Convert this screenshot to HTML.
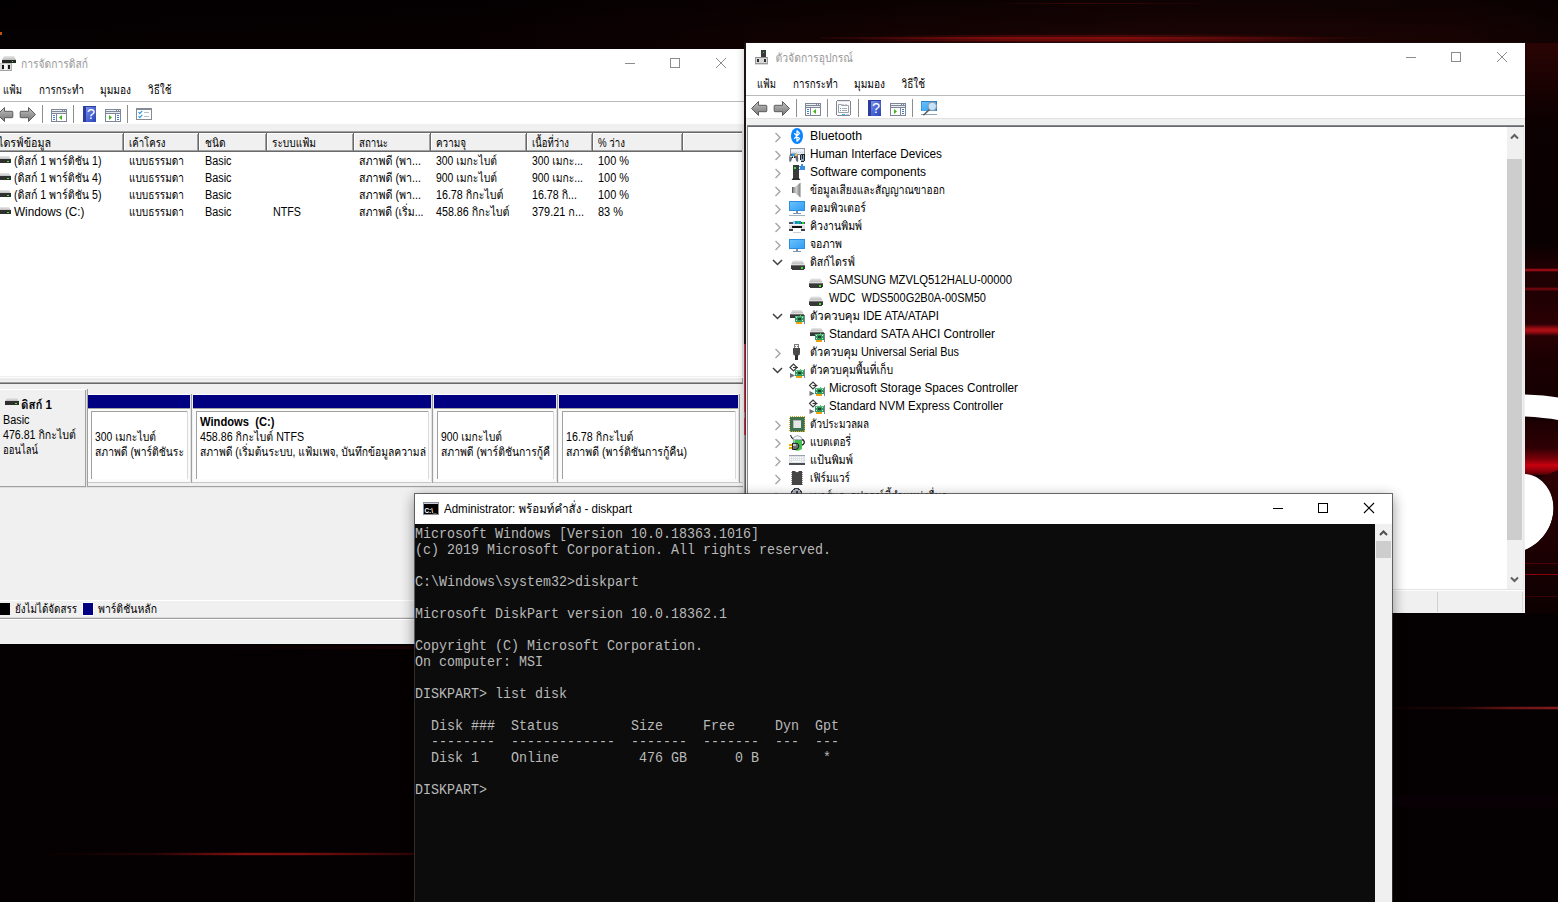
<!DOCTYPE html>
<html lang="th"><head><meta charset="utf-8"><title>desktop</title>
<style>
html,body{margin:0;padding:0;background:#050001;overflow:hidden}
body{width:1558px;height:902px}
svg{display:block;position:absolute;left:0;top:0}
rect{shape-rendering:crispEdges}
text{font-family:"Liberation Sans","Loma","Noto Sans Thai Looped","Sarabun",sans-serif;font-size:12px;fill:#000;white-space:pre}
text.b{font-weight:bold}
text.g{fill:#999}
text.con{font-family:"Liberation Mono","DejaVu Sans Mono",monospace;font-size:15px;fill:#b9b9b9}
text.q{font-family:"Liberation Sans",sans-serif;font-weight:normal;font-size:14.5px;fill:#fff}
</style></head>
<body>
<svg width="1558" height="902" viewBox="0 0 1558 902">
<defs>
<linearGradient id="wtop" x1="0" y1="0" x2="1" y2="0"><stop offset="0" stop-color="#050001"/><stop offset="0.3" stop-color="#070001"/><stop offset="0.55" stop-color="#130202"/><stop offset="0.75" stop-color="#1b0404"/><stop offset="0.93" stop-color="#190303"/><stop offset="1" stop-color="#100202"/></linearGradient>
<linearGradient id="wtopv" x1="0" y1="0" x2="0" y2="1"><stop offset="0" stop-color="#000" stop-opacity="0.45"/><stop offset="0.6" stop-color="#000" stop-opacity="0.1"/><stop offset="1" stop-color="#000" stop-opacity="0"/></linearGradient>
<radialGradient id="wglow" cx="0.5" cy="1" r="0.5" gradientTransform="matrix(1 0 0 1 0 0)"><stop offset="0" stop-color="#8a0a0a" stop-opacity="0.55"/><stop offset="1" stop-color="#8a0a0a" stop-opacity="0"/></radialGradient>
<linearGradient id="hfade" x1="0" y1="0" x2="1" y2="0"><stop offset="0" stop-color="#a01010" stop-opacity="0.1"/><stop offset="0.3" stop-color="#a01010" stop-opacity="0.85"/><stop offset="0.55" stop-color="#a01010" stop-opacity="0.85"/><stop offset="1" stop-color="#a01010" stop-opacity="0"/></linearGradient>
<linearGradient id="hfadeR" x1="0" y1="0" x2="1" y2="0"><stop offset="0" stop-color="#c01010" stop-opacity="0"/><stop offset="1" stop-color="#c81414" stop-opacity="0.95"/></linearGradient>
<linearGradient id="hfadeL" x1="0" y1="0" x2="1" y2="0"><stop offset="0" stop-color="#b01414" stop-opacity="0"/><stop offset="0.3" stop-color="#b01414" stop-opacity="0.18"/><stop offset="0.55" stop-color="#b41616" stop-opacity="0.8"/><stop offset="0.7" stop-color="#b01414" stop-opacity="0.75"/><stop offset="1" stop-color="#901010" stop-opacity="0.3"/></linearGradient>
<linearGradient id="rstrip" x1="0" y1="0" x2="0" y2="1"><stop offset="0" stop-color="#2a0404"/><stop offset="0.065" stop-color="#1c0202"/><stop offset="0.135" stop-color="#0c0001"/><stop offset="0.35" stop-color="#080001"/><stop offset="0.39" stop-color="#1e0002"/><stop offset="0.45" stop-color="#200003"/><stop offset="0.5" stop-color="#2c0004"/><stop offset="0.55" stop-color="#1c0002"/><stop offset="0.61" stop-color="#160002"/><stop offset="1" stop-color="#140102"/></linearGradient>
<linearGradient id="rglow" x1="0" y1="0" x2="0" y2="1"><stop offset="0" stop-color="#1c0002"/><stop offset="0.5" stop-color="#2e0004"/><stop offset="0.7" stop-color="#7a0009"/><stop offset="0.82" stop-color="#c8000f"/><stop offset="0.93" stop-color="#8a000a"/><stop offset="1" stop-color="#4a0005"/></linearGradient>
<linearGradient id="rglow2" x1="0" y1="0" x2="0" y2="1"><stop offset="0" stop-color="#300004"/><stop offset="1" stop-color="#0c0001"/></linearGradient>
<linearGradient id="band330" x1="0" y1="0" x2="0" y2="1"><stop offset="0" stop-color="#c01018" stop-opacity="0"/><stop offset="0.45" stop-color="#c01018" stop-opacity="0.85"/><stop offset="0.6" stop-color="#c01018" stop-opacity="0.85"/><stop offset="1" stop-color="#c01018" stop-opacity="0"/></linearGradient>
<linearGradient id="hfadeR2" x1="0" y1="0" x2="1" y2="0"><stop offset="0" stop-color="#7a1818" stop-opacity="0.05"/><stop offset="0.4" stop-color="#7a1818" stop-opacity="0.18"/><stop offset="0.7" stop-color="#801a1a" stop-opacity="0.7"/><stop offset="1" stop-color="#861c1c" stop-opacity="0.95"/></linearGradient>
<linearGradient id="arw" x1="0" y1="0" x2="0" y2="1"><stop offset="0" stop-color="#c4c4c4"/><stop offset="0.5" stop-color="#9a9a9a"/><stop offset="1" stop-color="#787878"/></linearGradient>
<linearGradient id="hlp" x1="0" y1="0" x2="1" y2="1"><stop offset="0" stop-color="#7d93e6"/><stop offset="0.5" stop-color="#4c68d6"/><stop offset="1" stop-color="#2a46b8"/></linearGradient>
<linearGradient id="drvtop" x1="0" y1="0" x2="0" y2="1"><stop offset="0" stop-color="#e8e8e8"/><stop offset="1" stop-color="#b8b8b8"/></linearGradient>
<linearGradient id="mon" x1="0" y1="0" x2="1" y2="1"><stop offset="0" stop-color="#6cc4ff"/><stop offset="1" stop-color="#2f9bf0"/></linearGradient>
<linearGradient id="spk" x1="0" y1="0" x2="1" y2="0"><stop offset="0" stop-color="#6e6e6e"/><stop offset="0.5" stop-color="#d0d0d0"/><stop offset="1" stop-color="#7c7c7c"/></linearGradient>
<linearGradient id="sh_r" x1="0" y1="0" x2="1" y2="0"><stop offset="0" stop-color="#000" stop-opacity="0.22"/><stop offset="0.35" stop-color="#000" stop-opacity="0.09"/><stop offset="1" stop-color="#000" stop-opacity="0"/></linearGradient>
<linearGradient id="sh_l" x1="1" y1="0" x2="0" y2="0"><stop offset="0" stop-color="#000" stop-opacity="0.22"/><stop offset="0.35" stop-color="#000" stop-opacity="0.09"/><stop offset="1" stop-color="#000" stop-opacity="0"/></linearGradient>
<linearGradient id="sh_t" x1="0" y1="1" x2="0" y2="0"><stop offset="0" stop-color="#000" stop-opacity="0.20"/><stop offset="0.4" stop-color="#000" stop-opacity="0.07"/><stop offset="1" stop-color="#000" stop-opacity="0"/></linearGradient>
<linearGradient id="sh_b" x1="0" y1="0" x2="0" y2="1"><stop offset="0" stop-color="#000" stop-opacity="0.22"/><stop offset="0.4" stop-color="#000" stop-opacity="0.08"/><stop offset="1" stop-color="#000" stop-opacity="0"/></linearGradient>
<filter id="bl1" filterUnits="userSpaceOnUse" x="725" y="23" width="820" height="610"><feGaussianBlur stdDeviation="5"/></filter>
<clipPath id="cp2"><rect x="0" y="49" width="745" height="595"/></clipPath>
<filter id="bl3" filterUnits="userSpaceOnUse" x="386" y="465" width="1035" height="523"><feGaussianBlur stdDeviation="7"/></filter>
</defs>
<rect x="0" y="0" width="1558" height="902" fill="#050001"/>
<rect x="0" y="0" width="1558" height="49" fill="url(#wtop)"/>
<rect x="0" y="0" width="1558" height="49" fill="url(#wtopv)"/>
<rect x="840" y="22" width="520" height="21" fill="url(#wglow)"/>
<rect x="820" y="37" width="560" height="2" fill="url(#hfade)" opacity="0.8"/>
<rect x="860" y="39" width="480" height="2" fill="url(#hfade)" opacity="0.5"/>
<rect x="880" y="35" width="440" height="2" fill="url(#hfade)" opacity="0.25"/>
<rect x="1000" y="3" width="220" height="1" fill="url(#hfade)" opacity="0.3"/>
<rect x="0" y="32" width="2" height="3" fill="#c05010"/>
<rect x="1525" y="43" width="33" height="570" fill="url(#rstrip)"/>
<rect x="1525" y="268" width="33" height="4" fill="#a00c14" opacity="0.3"/>
<rect x="1525" y="269" width="33" height="2" fill="#a00c14" opacity="0.85"/>
<rect x="1525" y="287" width="33" height="4" fill="#7a0a10" opacity="0.3"/>
<rect x="1525" y="288" width="33" height="2" fill="#7a0a10" opacity="0.75"/>
<rect x="1525" y="324" width="33" height="12" fill="url(#band330)"/>
<path d="M1525 394.5 Q1545 395 1558 397.5 L1558 420 Q1545 417.5 1525 416.5 Z" fill="#fff"/>
<rect x="1525" y="421" width="33" height="54" fill="url(#rglow)"/>
<path d="M1525 474 C1538 474 1553.500 488 1553.500 508 C1553.500 528 1540 544 1525 550 Z" fill="#fff"/>
<path d="M1525 550 C1540 544 1553.500 528 1553.500 508 C1553.500 495 1548 484 1540 478 L1558 470 L1558 613 L1525 613 Z" fill="url(#rglow2)"/>
<rect x="1525" y="563" width="33" height="1" fill="#4a0005"/>
<rect x="1525" y="574" width="33" height="1" fill="#8a000a"/>
<rect x="1525" y="596" width="33" height="1" fill="#3a0004"/>
<rect x="1393" y="707" width="165" height="2" fill="url(#hfadeR2)"/>
<rect x="1393" y="706" width="165" height="4" fill="url(#hfadeR2)" opacity="0.3"/>
<rect x="1393" y="795" width="165" height="12" fill="#0a0006" opacity="0.8"/>
<rect x="40" y="853" width="375" height="2" fill="url(#hfadeL)" opacity="0.85"/>
<rect x="40" y="852" width="375" height="4" fill="url(#hfadeL)" opacity="0.18"/>
<rect x="200" y="646" width="215" height="3" fill="url(#hfadeR)" opacity="0.12"/>
<rect x="-8" y="49" width="752" height="595" fill="#f0f0f0"/>
<rect x="-8" y="49" width="752" height="52" fill="#ffffff"/>
<rect x="-8" y="101" width="752" height="1" fill="#b9b9b9"/>
<rect x="-8" y="102" width="752" height="22" fill="#ffffff"/>
<path d="M4 56 H14 L16 60 H2 Z" fill="url(#drvtop)"/>
<rect x="2.3" y="59.8" width="13.400" height="3.400" rx="0.8" fill="#262626"/>
<rect x="11.5" y="60.8" width="1.8" height="1.6" fill="#3cf03c"/>
<rect x="-1" y="63" width="13" height="8" fill="#dadada"/>
<rect x="4" y="64" width="3" height="6" fill="#f4f4f4"/>
<rect x="-1" y="70" width="13" height="1" fill="#a2a2a2"/>
<rect x="11" y="63" width="1" height="8" fill="#b0b0b0"/>
<rect x="-1" y="63" width="13" height="1" fill="#c2c2c2"/>
<rect x="2" y="65" width="2" height="3.5" fill="#141414"/>
<rect x="8" y="65" width="2" height="3.5" fill="#141414"/>
<text x="21" y="68" class="g" textLength="67" lengthAdjust="spacingAndGlyphs">การจัดการดิสก์</text>
<path d="M716 58 L726 68 M726 58 L716 68" stroke="#8c8c8c" stroke-width="1" fill="none"/>
<rect x="670.5" y="58.5" width="9" height="9" fill="none" stroke="#8c8c8c" stroke-width="1" shape-rendering="crispEdges"/>
<rect x="625" y="63" width="10" height="1" fill="#8c8c8c"/>
<text x="3" y="94" textLength="19" lengthAdjust="spacingAndGlyphs">แฟ้ม</text>
<text x="39" y="94" textLength="45" lengthAdjust="spacingAndGlyphs">การกระทำ</text>
<text x="100" y="94" textLength="31" lengthAdjust="spacingAndGlyphs">มุมมอง</text>
<text x="148" y="94" textLength="23.5" lengthAdjust="spacingAndGlyphs">วิธีใช้</text>
<path d="M-2.5 114.5 L4.5 107.5 V111.3 H12 Q12.8 111.3 12.8 112.1 V116.9 Q12.8 117.7 12 117.7 H4.5 V121.5 Z" fill="url(#arw)" stroke="#5c5c5c" stroke-width="1" stroke-linejoin="round"/>
<path d="M35.5 114.5 L28.5 107.5 V111.3 H21 Q20.2 111.3 20.2 112.1 V116.9 Q20.2 117.7 21 117.7 H28.5 V121.5 Z" fill="url(#arw)" stroke="#5c5c5c" stroke-width="1" stroke-linejoin="round"/>
<rect x="42" y="105" width="1" height="18" fill="#8d8d8d"/>
<rect x="51" y="109" width="16" height="13" fill="#7d8798"/>
<rect x="52" y="110" width="14" height="1" fill="#eef1f6"/>
<rect x="62" y="110" width="1" height="1" fill="#7d8798"/>
<rect x="64" y="110" width="1" height="1" fill="#7d8798"/>
<rect x="52" y="112" width="14" height="1" fill="#e4e8ef"/>
<rect x="52" y="114" width="4" height="7" fill="#ffffff"/>
<rect x="57" y="114" width="9" height="7" fill="#ffffff"/>
<rect x="53" y="115" width="2" height="1" fill="#3c7fd2"/>
<rect x="53" y="117" width="2" height="1" fill="#3c7fd2"/>
<rect x="53" y="119" width="2" height="1" fill="#3c7fd2"/>
<path d="M59 117.5 L62 115 V120 Z" fill="#3db51a"/>
<rect x="73" y="105" width="1" height="18" fill="#8d8d8d"/>
<rect x="83" y="106" width="13" height="16" fill="#2b3c9c"/>
<rect x="86" y="106.5" width="9.5" height="15" fill="url(#hlp)"/>
<text x="87" y="119.3" class="q">?</text>
<rect x="105" y="109" width="16" height="13" fill="#7d8798"/>
<rect x="106" y="110" width="14" height="1" fill="#eef1f6"/>
<rect x="116" y="110" width="1" height="1" fill="#7d8798"/>
<rect x="118" y="110" width="1" height="1" fill="#7d8798"/>
<rect x="106" y="112" width="14" height="1" fill="#e4e8ef"/>
<rect x="106" y="114" width="9" height="7" fill="#ffffff"/>
<rect x="116" y="114" width="4" height="7" fill="#ffffff"/>
<rect x="117" y="115" width="2" height="1" fill="#3c7fd2"/>
<rect x="117" y="117" width="2" height="1" fill="#3c7fd2"/>
<rect x="117" y="119" width="2" height="1" fill="#3c7fd2"/>
<path d="M112 117.5 L109 115 V120 Z" fill="#3db51a"/>
<rect x="127" y="105" width="1" height="18" fill="#8d8d8d"/>
<rect x="136" y="108" width="16" height="12" fill="#848b96"/>
<rect x="137" y="110" width="14" height="9" fill="#ffffff"/>
<path d="M138.5 112 l1.3 1.6 l2.4 -2.8" stroke="#2f8fe6" stroke-width="1.1" fill="none"/>
<rect x="144" y="112" width="5" height="1" fill="#b9bec6"/>
<path d="M138.5 116 l1.3 1.6 l2.4 -2.8" stroke="#2f8fe6" stroke-width="1.1" fill="none"/>
<rect x="144" y="116" width="5" height="1" fill="#b9bec6"/>
<rect x="-8" y="131" width="750" height="1" fill="#a0a0a0"/>
<rect x="-8" y="132" width="750" height="1" fill="#696969"/>
<rect x="-8" y="133" width="750" height="243" fill="#ffffff"/>
<rect x="-8" y="133" width="750" height="19" fill="#f0f0f0"/>
<rect x="-8" y="133" width="750" height="1" fill="#ffffff"/>
<rect x="-8" y="150" width="750" height="1" fill="#a0a0a0"/>
<rect x="-8" y="151" width="750" height="1" fill="#696969"/>
<rect x="122" y="134" width="1" height="17" fill="#a0a0a0"/>
<rect x="123" y="133" width="1" height="19" fill="#696969"/>
<rect x="124" y="133" width="1" height="17" fill="#ffffff"/>
<rect x="197" y="134" width="1" height="17" fill="#a0a0a0"/>
<rect x="198" y="133" width="1" height="19" fill="#696969"/>
<rect x="199" y="133" width="1" height="17" fill="#ffffff"/>
<rect x="265" y="134" width="1" height="17" fill="#a0a0a0"/>
<rect x="266" y="133" width="1" height="19" fill="#696969"/>
<rect x="267" y="133" width="1" height="17" fill="#ffffff"/>
<rect x="352" y="134" width="1" height="17" fill="#a0a0a0"/>
<rect x="353" y="133" width="1" height="19" fill="#696969"/>
<rect x="354" y="133" width="1" height="17" fill="#ffffff"/>
<rect x="429" y="134" width="1" height="17" fill="#a0a0a0"/>
<rect x="430" y="133" width="1" height="19" fill="#696969"/>
<rect x="431" y="133" width="1" height="17" fill="#ffffff"/>
<rect x="525" y="134" width="1" height="17" fill="#a0a0a0"/>
<rect x="526" y="133" width="1" height="19" fill="#696969"/>
<rect x="527" y="133" width="1" height="17" fill="#ffffff"/>
<rect x="591" y="134" width="1" height="17" fill="#a0a0a0"/>
<rect x="592" y="133" width="1" height="19" fill="#696969"/>
<rect x="593" y="133" width="1" height="17" fill="#ffffff"/>
<rect x="681" y="134" width="1" height="17" fill="#a0a0a0"/>
<rect x="682" y="133" width="1" height="19" fill="#696969"/>
<rect x="683" y="133" width="1" height="17" fill="#ffffff"/>
<rect x="742" y="131" width="1" height="246" fill="#e3e3e3"/>
<rect x="743" y="124" width="1" height="260" fill="#f0f0f0"/>
<text x="-2" y="147" textLength="53" lengthAdjust="spacingAndGlyphs">ไดรฟ์ข้อมูล</text>
<text x="129" y="147" textLength="36.5" lengthAdjust="spacingAndGlyphs">เค้าโครง</text>
<text x="205" y="147" textLength="20.5" lengthAdjust="spacingAndGlyphs">ชนิด</text>
<text x="272" y="147" textLength="44" lengthAdjust="spacingAndGlyphs">ระบบแฟ้ม</text>
<text x="359" y="147" textLength="29" lengthAdjust="spacingAndGlyphs">สถานะ</text>
<text x="436" y="147" textLength="30" lengthAdjust="spacingAndGlyphs">ความจุ</text>
<text x="532" y="147" textLength="37" lengthAdjust="spacingAndGlyphs">เนื้อที่ว่าง</text>
<text x="598" y="147" textLength="27" lengthAdjust="spacingAndGlyphs">% ว่าง</text>
<path d="M-1 156 H9 L11 159.5 H-3 Z" fill="url(#drvtop)"/>
<rect x="-3" y="159.3" width="14" height="3.700" rx="0.8" fill="#2f2f2f"/>
<rect x="7" y="160.5" width="1.8" height="1.6" fill="#3cf03c"/>
<text x="14" y="165" textLength="87.5" lengthAdjust="spacingAndGlyphs">(ดิสก์ 1 พาร์ติชัน 1)</text>
<text x="129" y="165" textLength="55" lengthAdjust="spacingAndGlyphs">แบบธรรมดา</text>
<text x="205" y="165" textLength="26.5" lengthAdjust="spacingAndGlyphs">Basic</text>
<text x="359" y="165" textLength="62" lengthAdjust="spacingAndGlyphs">สภาพดี (พา...</text>
<text x="436" y="165" textLength="61" lengthAdjust="spacingAndGlyphs">300 เมกะไบต์</text>
<text x="532" y="165" textLength="51" lengthAdjust="spacingAndGlyphs">300 เมกะ...</text>
<text x="598" y="165" textLength="31" lengthAdjust="spacingAndGlyphs">100 %</text>
<path d="M-1 173 H9 L11 176.5 H-3 Z" fill="url(#drvtop)"/>
<rect x="-3" y="176.3" width="14" height="3.700" rx="0.8" fill="#2f2f2f"/>
<rect x="7" y="177.5" width="1.8" height="1.6" fill="#3cf03c"/>
<text x="14" y="182" textLength="87.5" lengthAdjust="spacingAndGlyphs">(ดิสก์ 1 พาร์ติชัน 4)</text>
<text x="129" y="182" textLength="55" lengthAdjust="spacingAndGlyphs">แบบธรรมดา</text>
<text x="205" y="182" textLength="26.5" lengthAdjust="spacingAndGlyphs">Basic</text>
<text x="359" y="182" textLength="62" lengthAdjust="spacingAndGlyphs">สภาพดี (พา...</text>
<text x="436" y="182" textLength="61" lengthAdjust="spacingAndGlyphs">900 เมกะไบต์</text>
<text x="532" y="182" textLength="51" lengthAdjust="spacingAndGlyphs">900 เมกะ...</text>
<text x="598" y="182" textLength="31" lengthAdjust="spacingAndGlyphs">100 %</text>
<path d="M-1 190 H9 L11 193.5 H-3 Z" fill="url(#drvtop)"/>
<rect x="-3" y="193.3" width="14" height="3.700" rx="0.8" fill="#2f2f2f"/>
<rect x="7" y="194.5" width="1.8" height="1.6" fill="#3cf03c"/>
<text x="14" y="199" textLength="87.5" lengthAdjust="spacingAndGlyphs">(ดิสก์ 1 พาร์ติชัน 5)</text>
<text x="129" y="199" textLength="55" lengthAdjust="spacingAndGlyphs">แบบธรรมดา</text>
<text x="205" y="199" textLength="26.5" lengthAdjust="spacingAndGlyphs">Basic</text>
<text x="359" y="199" textLength="62" lengthAdjust="spacingAndGlyphs">สภาพดี (พา...</text>
<text x="436" y="199" textLength="67.5" lengthAdjust="spacingAndGlyphs">16.78 กิกะไบต์</text>
<text x="532" y="199" textLength="45" lengthAdjust="spacingAndGlyphs">16.78 กิ...</text>
<text x="598" y="199" textLength="31" lengthAdjust="spacingAndGlyphs">100 %</text>
<path d="M-1 207 H9 L11 210.5 H-3 Z" fill="url(#drvtop)"/>
<rect x="-3" y="210.3" width="14" height="3.700" rx="0.8" fill="#2f2f2f"/>
<rect x="7" y="211.5" width="1.8" height="1.6" fill="#3cf03c"/>
<text x="14" y="216" textLength="70.5" lengthAdjust="spacingAndGlyphs">Windows (C:)</text>
<text x="129" y="216" textLength="55" lengthAdjust="spacingAndGlyphs">แบบธรรมดา</text>
<text x="205" y="216" textLength="26.5" lengthAdjust="spacingAndGlyphs">Basic</text>
<text x="273" y="216" textLength="28" lengthAdjust="spacingAndGlyphs">NTFS</text>
<text x="359" y="216" textLength="64.5" lengthAdjust="spacingAndGlyphs">สภาพดี (เริ่ม...</text>
<text x="436" y="216" textLength="73.5" lengthAdjust="spacingAndGlyphs">458.86 กิกะไบต์</text>
<text x="532" y="216" textLength="52" lengthAdjust="spacingAndGlyphs">379.21 ก...</text>
<text x="598" y="216" textLength="25" lengthAdjust="spacingAndGlyphs">83 %</text>
<rect x="-8" y="376" width="751" height="8" fill="#f0f0f0"/>
<rect x="-8" y="377" width="751" height="1" fill="#fafafa"/>
<rect x="-8" y="379" width="751" height="1" fill="#e6e6e6"/>
<rect x="-8" y="382" width="751" height="1" fill="#a0a0a0"/>
<rect x="-8" y="383" width="751" height="1" fill="#696969"/>
<rect x="741" y="378" width="2" height="5" fill="#a0a0a0"/>
<rect x="741" y="378" width="1" height="4" fill="#f0f0f0"/>
<rect x="-8" y="389" width="94" height="98" fill="#f0f0f0"/>
<rect x="-8" y="389" width="95" height="1" fill="#ffffff"/>
<rect x="85" y="390" width="1" height="97" fill="#a0a0a0"/>
<rect x="86" y="389" width="1" height="99" fill="#e3e3e3"/>
<rect x="-8" y="486" width="94" height="1" fill="#a0a0a0"/>
<rect x="-8" y="487" width="95" height="1" fill="#dcdcdc"/>
<path d="M7 398 H17 L19 401.5 H5 Z" fill="url(#drvtop)"/>
<rect x="5" y="401.3" width="14" height="3.700" rx="0.8" fill="#2f2f2f"/>
<rect x="15" y="402.5" width="1.8" height="1.6" fill="#3cf03c"/>
<text x="21" y="408.5" class="b" textLength="31" lengthAdjust="spacingAndGlyphs">ดิสก์ 1</text>
<text x="3" y="424" textLength="26.5" lengthAdjust="spacingAndGlyphs">Basic</text>
<text x="3" y="439" textLength="73" lengthAdjust="spacingAndGlyphs">476.81 กิกะไบต์</text>
<text x="3" y="454" textLength="35" lengthAdjust="spacingAndGlyphs">ออนไลน์</text>
<rect x="87" y="389" width="656" height="98" fill="#f0f0f0"/>
<rect x="87" y="482" width="656" height="1" fill="#c8c8c8"/>
<rect x="87" y="486" width="656" height="1" fill="#a0a0a0"/>
<rect x="87" y="487" width="656" height="1" fill="#e3e3e3"/>
<rect x="88" y="394" width="102" height="1" fill="#ffffff"/>
<rect x="88" y="395" width="102" height="13" fill="#000080"/>
<rect x="88" y="408" width="102" height="74" fill="#ffffff"/>
<rect x="88" y="408" width="102" height="3" fill="#fbfbfb"/>
<rect x="88" y="408" width="102" height="1" fill="#a6a6a0"/>
<rect x="88" y="409" width="3" height="73" fill="#fbfbfb"/>
<rect x="187" y="409" width="3" height="73" fill="#fbfbfb"/>
<rect x="88" y="479" width="102" height="3" fill="#fbfbfb"/>
<rect x="91" y="411" width="96" height="1" fill="#a0a0a0"/>
<rect x="91" y="411" width="1" height="68" fill="#a0a0a0"/>
<rect x="187" y="411" width="1" height="68" fill="#dadada"/>
<rect x="190" y="394" width="1" height="89" fill="#e3e3e3"/>
<rect x="191" y="394" width="1" height="89" fill="#a0a0a0"/>
<rect x="193" y="394" width="238" height="1" fill="#ffffff"/>
<rect x="193" y="395" width="238" height="13" fill="#000080"/>
<rect x="193" y="408" width="238" height="74" fill="#ffffff"/>
<rect x="193" y="408" width="238" height="3" fill="#fbfbfb"/>
<rect x="193" y="408" width="238" height="1" fill="#a6a6a0"/>
<rect x="193" y="409" width="3" height="73" fill="#fbfbfb"/>
<rect x="428" y="409" width="3" height="73" fill="#fbfbfb"/>
<rect x="193" y="479" width="238" height="3" fill="#fbfbfb"/>
<rect x="196" y="411" width="232" height="1" fill="#a0a0a0"/>
<rect x="196" y="411" width="1" height="68" fill="#a0a0a0"/>
<rect x="428" y="411" width="1" height="68" fill="#dadada"/>
<rect x="431" y="394" width="1" height="89" fill="#e3e3e3"/>
<rect x="432" y="394" width="1" height="89" fill="#a0a0a0"/>
<rect x="434" y="394" width="122" height="1" fill="#ffffff"/>
<rect x="434" y="395" width="122" height="13" fill="#000080"/>
<rect x="434" y="408" width="122" height="74" fill="#ffffff"/>
<rect x="434" y="408" width="122" height="3" fill="#fbfbfb"/>
<rect x="434" y="408" width="122" height="1" fill="#a6a6a0"/>
<rect x="434" y="409" width="3" height="73" fill="#fbfbfb"/>
<rect x="553" y="409" width="3" height="73" fill="#fbfbfb"/>
<rect x="434" y="479" width="122" height="3" fill="#fbfbfb"/>
<rect x="437" y="411" width="116" height="1" fill="#a0a0a0"/>
<rect x="437" y="411" width="1" height="68" fill="#a0a0a0"/>
<rect x="553" y="411" width="1" height="68" fill="#dadada"/>
<rect x="556" y="394" width="1" height="89" fill="#e3e3e3"/>
<rect x="557" y="394" width="1" height="89" fill="#a0a0a0"/>
<rect x="559" y="394" width="179" height="1" fill="#ffffff"/>
<rect x="559" y="395" width="179" height="13" fill="#000080"/>
<rect x="559" y="408" width="179" height="74" fill="#ffffff"/>
<rect x="559" y="408" width="179" height="3" fill="#fbfbfb"/>
<rect x="559" y="408" width="179" height="1" fill="#a6a6a0"/>
<rect x="559" y="409" width="3" height="73" fill="#fbfbfb"/>
<rect x="735" y="409" width="3" height="73" fill="#fbfbfb"/>
<rect x="559" y="479" width="179" height="3" fill="#fbfbfb"/>
<rect x="562" y="411" width="173" height="1" fill="#a0a0a0"/>
<rect x="562" y="411" width="1" height="68" fill="#a0a0a0"/>
<rect x="735" y="411" width="1" height="68" fill="#dadada"/>
<rect x="738" y="394" width="1" height="89" fill="#e3e3e3"/>
<rect x="739" y="394" width="1" height="89" fill="#a0a0a0"/>
<rect x="87" y="389" width="1" height="98" fill="#a0a0a0"/>
<text x="95" y="441" textLength="61" lengthAdjust="spacingAndGlyphs">300 เมกะไบต์</text>
<text x="95" y="456" textLength="89" lengthAdjust="spacingAndGlyphs">สภาพดี (พาร์ติชันระ</text>
<text x="200" y="426" class="b" textLength="74.5" lengthAdjust="spacingAndGlyphs">Windows  (C:)</text>
<text x="200" y="441" textLength="104" lengthAdjust="spacingAndGlyphs">458.86 กิกะไบต์ NTFS</text>
<text x="200" y="456" textLength="226" lengthAdjust="spacingAndGlyphs">สภาพดี (เริ่มต้นระบบ, แฟ้มเพจ, บันทึกข้อมูลความล่</text>
<text x="441" y="441" textLength="61" lengthAdjust="spacingAndGlyphs">900 เมกะไบต์</text>
<text x="441" y="456" textLength="109" lengthAdjust="spacingAndGlyphs">สภาพดี (พาร์ติชันการกู้คื</text>
<text x="566" y="441" textLength="67.5" lengthAdjust="spacingAndGlyphs">16.78 กิกะไบต์</text>
<text x="566" y="456" textLength="121" lengthAdjust="spacingAndGlyphs">สภาพดี (พาร์ติชันการกู้คืน)</text>
<rect x="-8" y="600" width="752" height="1" fill="#ffffff"/>
<rect x="-8" y="603" width="18" height="12" fill="#000000"/>
<text x="15" y="613" textLength="62" lengthAdjust="spacingAndGlyphs">ยังไม่ได้จัดสรร</text>
<rect x="82" y="602" width="12" height="14" fill="#ffffff"/>
<rect x="83" y="603" width="10" height="12" fill="#000080"/>
<text x="98" y="613" textLength="59" lengthAdjust="spacingAndGlyphs">พาร์ติชันหลัก</text>
<rect x="-8" y="617" width="752" height="1" fill="#dcdcdc"/>
<rect x="-8" y="618" width="752" height="1" fill="#a0a0a0"/>
<rect x="-8" y="619" width="752" height="1" fill="#ffffff"/>
<g clip-path="url(#cp2)"><rect x="745" y="45" width="780" height="570" fill="#000" opacity="0.28" filter="url(#bl1)"/></g>
<rect x="744" y="42" width="781" height="1" fill="#1c0a0a"/>
<rect x="744" y="43" width="1" height="301" fill="#1c1010"/>
<rect x="744" y="344" width="1" height="68" fill="#b03040"/>
<rect x="744" y="412" width="1" height="6" fill="#8a8080"/>
<rect x="744" y="418" width="1" height="17" fill="#b03040"/>
<rect x="744" y="435" width="1" height="178" fill="#909090"/>
<rect x="745" y="43" width="1" height="301" fill="#1c1212"/>
<rect x="745" y="344" width="1" height="91" fill="#70202c"/>
<rect x="745" y="435" width="1" height="178" fill="#5e5a5a"/>
<rect x="746" y="43" width="779" height="570" fill="#f0f0f0"/>
<rect x="746" y="43" width="779" height="52" fill="#ffffff"/>
<rect x="746" y="95" width="779" height="1" fill="#b9b9b9"/>
<rect x="746" y="96" width="779" height="22" fill="#ffffff"/>
<rect x="746" y="118" width="779" height="1" fill="#e2e2e2"/>
<rect x="761" y="49.5" width="5" height="7.5" fill="#3a3a3a"/>
<rect x="763" y="51.5" width="1" height="1" fill="#38e038"/>
<rect x="755" y="57" width="13" height="7.5" fill="#d8d8d8"/>
<rect x="755" y="57" width="13" height="1" fill="#8e8e8e"/>
<rect x="755" y="63" width="13" height="1" fill="#9a9a9a"/>
<rect x="755" y="57" width="1" height="7" fill="#9a9a9a"/>
<rect x="767" y="57" width="1" height="7" fill="#9a9a9a"/>
<rect x="757" y="59" width="2" height="3" fill="#2c2c2c"/>
<rect x="764" y="59" width="2" height="3" fill="#2c2c2c"/>
<text x="775.5" y="62" class="g" textLength="77.5" lengthAdjust="spacingAndGlyphs">ตัวจัดการอุปกรณ์</text>
<path d="M1497 52 L1507 62 M1507 52 L1497 62" stroke="#8c8c8c" stroke-width="1" fill="none"/>
<rect x="1451.5" y="52.5" width="9" height="9" fill="none" stroke="#8c8c8c" stroke-width="1" shape-rendering="crispEdges"/>
<rect x="1406" y="57" width="10" height="1" fill="#8c8c8c"/>
<text x="757" y="88" textLength="19" lengthAdjust="spacingAndGlyphs">แฟ้ม</text>
<text x="793" y="88" textLength="45" lengthAdjust="spacingAndGlyphs">การกระทำ</text>
<text x="854" y="88" textLength="31" lengthAdjust="spacingAndGlyphs">มุมมอง</text>
<text x="901.5" y="88" textLength="23.5" lengthAdjust="spacingAndGlyphs">วิธีใช้</text>
<path d="M751.5 108.5 L758.5 101.5 V105.3 H766 Q766.8 105.3 766.8 106.1 V110.9 Q766.8 111.7 766 111.7 H758.5 V115.5 Z" fill="url(#arw)" stroke="#5c5c5c" stroke-width="1" stroke-linejoin="round"/>
<path d="M789.5 108.5 L782.5 101.5 V105.3 H775 Q774.2 105.3 774.2 106.1 V110.9 Q774.2 111.7 775 111.7 H782.5 V115.5 Z" fill="url(#arw)" stroke="#5c5c5c" stroke-width="1" stroke-linejoin="round"/>
<rect x="796" y="99" width="1" height="18" fill="#8d8d8d"/>
<rect x="805" y="103" width="16" height="13" fill="#7d8798"/>
<rect x="806" y="104" width="14" height="1" fill="#eef1f6"/>
<rect x="816" y="104" width="1" height="1" fill="#7d8798"/>
<rect x="818" y="104" width="1" height="1" fill="#7d8798"/>
<rect x="806" y="106" width="14" height="1" fill="#e4e8ef"/>
<rect x="806" y="108" width="4" height="7" fill="#ffffff"/>
<rect x="811" y="108" width="9" height="7" fill="#ffffff"/>
<rect x="807" y="109" width="2" height="1" fill="#3c7fd2"/>
<rect x="807" y="111" width="2" height="1" fill="#3c7fd2"/>
<rect x="807" y="113" width="2" height="1" fill="#3c7fd2"/>
<path d="M813 111.5 L816 109 V114 Z" fill="#3db51a"/>
<rect x="827" y="99" width="1" height="18" fill="#8d8d8d"/>
<rect x="836.5" y="100.5" width="14" height="15" rx="1.6" fill="#fbfbfd" stroke="#80858f" stroke-width="1"/>
<rect x="838" y="101" width="11" height="1" fill="#e3e6ec"/>
<path d="M838.5 112.5 V104.5 H841.5 V105.5 H848.5 V112.5 Z" fill="#ffffff" stroke="#9aa1ad" stroke-width="1"/>
<rect x="842" y="104" width="2" height="1" fill="#c5cad3"/>
<rect x="845" y="104" width="2" height="1" fill="#c5cad3"/>
<rect x="840" y="108" width="1" height="1" fill="#1fb4f2"/>
<rect x="842" y="108" width="5" height="1" fill="#a7adb8"/>
<rect x="840" y="110" width="1" height="1" fill="#8a909b"/>
<rect x="842" y="110" width="5" height="1" fill="#a7adb8"/>
<rect x="842" y="114" width="3" height="1" fill="#25b7f0"/>
<rect x="846" y="114" width="3" height="1" fill="#c5cad3"/>
<rect x="858" y="99" width="1" height="18" fill="#8d8d8d"/>
<rect x="868" y="100" width="13" height="16" fill="#2b3c9c"/>
<rect x="871" y="100.5" width="9.5" height="15" fill="url(#hlp)"/>
<text x="872" y="113.3" class="q">?</text>
<rect x="890" y="103" width="16" height="13" fill="#7d8798"/>
<rect x="891" y="104" width="14" height="1" fill="#eef1f6"/>
<rect x="901" y="104" width="1" height="1" fill="#7d8798"/>
<rect x="903" y="104" width="1" height="1" fill="#7d8798"/>
<rect x="891" y="106" width="14" height="1" fill="#e4e8ef"/>
<rect x="891" y="108" width="9" height="7" fill="#ffffff"/>
<rect x="901" y="108" width="4" height="7" fill="#ffffff"/>
<rect x="902" y="109" width="2" height="1" fill="#3c7fd2"/>
<rect x="902" y="111" width="2" height="1" fill="#3c7fd2"/>
<rect x="902" y="113" width="2" height="1" fill="#3c7fd2"/>
<path d="M897 111.5 L894 109 V114 Z" fill="#3db51a"/>
<rect x="912" y="99" width="1" height="18" fill="#8d8d8d"/>
<rect x="921" y="101" width="16" height="9.5" fill="url(#mon)"/>
<rect x="921" y="101" width="16" height="1" fill="#2a7fc4"/>
<rect x="921" y="101" width="1" height="9.5" fill="#3a93dc"/>
<rect x="936" y="101" width="1" height="9.5" fill="#2a7fc4"/>
<rect x="921" y="114" width="16" height="1.3" fill="#8da3ba"/>
<circle cx="932.3" cy="106.3" r="4.200" fill="#cfeaff" fill-opacity="0.9" stroke="#8e979f" stroke-width="1.1"/>
<path d="M929.3 109.6 L923.3 115.3" stroke="#5d6168" stroke-width="1.5" fill="none"/>
<rect x="747" y="125" width="777" height="1" fill="#828790"/>
<rect x="747" y="126" width="777" height="1" fill="#696969"/>
<rect x="747" y="125" width="1" height="464" fill="#828790"/>
<rect x="748" y="127" width="759" height="462" fill="#ffffff"/>
<rect x="1507" y="127" width="17" height="462" fill="#f0f0f0"/>
<rect x="1523" y="127" width="1" height="462" fill="#e8e8e8"/>
<rect x="1507" y="159" width="15" height="381" fill="#cdcdcd"/>
<path d="M1511.0 138.5 L1514.5 135.0 L1518.0 138.5" stroke="#606060" stroke-width="2" fill="none"/>
<path d="M1511.0 577.5 L1514.5 581.0 L1518.0 577.5" stroke="#606060" stroke-width="2" fill="none"/>
<rect x="747" y="589" width="777" height="1" fill="#e3e3e3"/>
<rect x="747" y="590" width="777" height="1" fill="#ffffff"/>
<rect x="1437" y="592" width="1" height="20" fill="#d0d0d0"/>
<rect x="1522" y="592" width="1" height="20" fill="#d8d8d8"/>
<path d="M775.5 133.0 L780.0 137.5 L775.5 142.0" stroke="#a6a6a6" stroke-width="1.4" fill="none"/>
<ellipse cx="797" cy="136" rx="6" ry="8" fill="#0a84ff"/>
<path d="M794.2 133.2 L799.6 138.6 L797 141.2 V130.8 L799.6 133.4 L794.2 138.8" stroke="#fff" stroke-width="1.25" stroke-linejoin="round" fill="none"/>
<text x="810" y="140" textLength="52" lengthAdjust="spacingAndGlyphs">Bluetooth</text>
<path d="M775.5 151.0 L780.0 155.5 L775.5 160.0" stroke="#a6a6a6" stroke-width="1.4" fill="none"/>
<rect x="790" y="148" width="14" height="6.5" fill="#e9edf1" stroke="#8c97a3" stroke-width="1"/>
<rect x="792" y="150" width="1" height="1" fill="#ffffff"/>
<rect x="794" y="150" width="1" height="1" fill="#ffffff"/>
<rect x="796" y="150" width="1" height="1" fill="#ffffff"/>
<rect x="798" y="150" width="1" height="1" fill="#ffffff"/>
<rect x="800" y="150" width="1" height="1" fill="#ffffff"/>
<rect x="802" y="150" width="1" height="1" fill="#ffffff"/>
<rect x="792" y="152" width="1" height="1" fill="#cfd6dd"/>
<rect x="794" y="152" width="1" height="1" fill="#cfd6dd"/>
<rect x="796" y="152" width="1" height="1" fill="#cfd6dd"/>
<rect x="798" y="152" width="1" height="1" fill="#cfd6dd"/>
<rect x="800" y="152" width="1" height="1" fill="#cfd6dd"/>
<rect x="802" y="152" width="1" height="1" fill="#cfd6dd"/>
<path d="M789.3 161.5 Q788.7 153.5 791.5 153.5 H796 Q798.5 153.5 798.2 161.5 Q796 162.5 795.5 158 H792 Q791.5 162.5 789.3 161.5 Z" fill="#5d6a74"/>
<rect x="792" y="154" width="3" height="2" fill="#1e9fff"/>
<rect x="795" y="154" width="2" height="2" fill="#f0c030"/>
<rect x="796" y="156" width="1" height="1" fill="#e04020"/>
<rect x="790" y="156" width="2" height="1" fill="#d8dde2"/>
<rect x="792" y="157" width="1" height="1" fill="#15191d"/>
<rect x="794" y="157" width="1" height="1" fill="#15191d"/>
<rect x="793" y="156" width="1" height="2" fill="#e8e8e8"/>
<rect x="800.3" y="153.8" width="4.800" height="8" rx="2" fill="#1c2228"/>
<rect x="801" y="155" width="3" height="6" fill="#8aa0b8"/>
<rect x="802" y="155" width="1" height="4" fill="#1c2228"/>
<text x="810" y="158" textLength="132" lengthAdjust="spacingAndGlyphs">Human Interface Devices</text>
<path d="M775.5 169.0 L780.0 173.5 L775.5 178.0" stroke="#a6a6a6" stroke-width="1.4" fill="none"/>
<rect x="793" y="165" width="6" height="13" fill="#3a3a3a"/>
<rect x="794" y="167" width="2" height="2" fill="#38e038"/>
<path d="M791.5 180 L793 178 H799 L800.5 180 Z" fill="#2c2c2c"/>
<rect x="799" y="166" width="6" height="4" fill="#3a8fe0"/>
<rect x="801" y="164" width="2" height="2" fill="#3a8fe0"/>
<rect x="799" y="167" width="1" height="2" fill="#ffffff"/>
<text x="810" y="176" textLength="116" lengthAdjust="spacingAndGlyphs">Software components</text>
<path d="M775.5 187.0 L780.0 191.5 L775.5 196.0" stroke="#a6a6a6" stroke-width="1.4" fill="none"/>
<path d="M792 187 H795 L800.5 182.5 V197.5 L795 193 H792 Z" fill="url(#spk)"/>
<rect x="792" y="187" width="1" height="6" fill="#5c5c5c"/>
<text x="810" y="194" textLength="135" lengthAdjust="spacingAndGlyphs">ข้อมูลเสียงและสัญญาณขาออก</text>
<path d="M775.5 205.0 L780.0 209.5 L775.5 214.0" stroke="#a6a6a6" stroke-width="1.4" fill="none"/>
<rect x="789" y="201" width="16" height="10" fill="url(#mon)"/>
<rect x="789" y="201" width="16" height="1" fill="#2d8ee0"/>
<rect x="789" y="210" width="16" height="1" fill="#2d8ee0"/>
<rect x="789" y="201" width="1" height="10" fill="#2d8ee0"/>
<rect x="804" y="201" width="1" height="10" fill="#2d8ee0"/>
<rect x="796" y="211" width="2" height="2" fill="#7d93ad"/>
<rect x="793" y="213" width="8" height="1" fill="#7d93ad"/>
<rect x="789" y="215" width="16" height="1" fill="#9fb0c4"/>
<text x="810" y="212" textLength="56" lengthAdjust="spacingAndGlyphs">คอมพิวเตอร์</text>
<path d="M775.5 223.0 L780.0 227.5 L775.5 232.0" stroke="#a6a6a6" stroke-width="1.4" fill="none"/>
<rect x="789" y="222" width="16" height="2" fill="#4b5157"/>
<rect x="793" y="221" width="8" height="3" fill="#1683e8"/>
<rect x="793" y="221" width="2" height="3" fill="#8ccfff"/>
<rect x="797" y="221" width="2" height="3" fill="#10c24a"/>
<rect x="801" y="222" width="3" height="2" fill="#3a3f44"/>
<rect x="802" y="222" width="2" height="2" fill="#1be01b"/>
<rect x="789" y="224" width="16" height="5" fill="#e1e1e1"/>
<rect x="789" y="224" width="16" height="1" fill="#f6f6f6"/>
<rect x="792" y="226" width="10" height="2" fill="#151515"/>
<rect x="789" y="229" width="16" height="2" fill="#3c4349"/>
<rect x="793" y="228" width="8" height="4" fill="#ffffff"/>
<rect x="793" y="232" width="8" height="1" fill="#cfcfcf"/>
<text x="810" y="230" textLength="52" lengthAdjust="spacingAndGlyphs">คิวงานพิมพ์</text>
<path d="M775.5 241.0 L780.0 245.5 L775.5 250.0" stroke="#a6a6a6" stroke-width="1.4" fill="none"/>
<rect x="789" y="239" width="16" height="10" fill="url(#mon)"/>
<rect x="789" y="239" width="16" height="1" fill="#2d8ee0"/>
<rect x="789" y="248" width="16" height="1" fill="#2d8ee0"/>
<rect x="789" y="239" width="1" height="10" fill="#2d8ee0"/>
<rect x="804" y="239" width="1" height="10" fill="#2d8ee0"/>
<rect x="796" y="249" width="2" height="2" fill="#7d93ad"/>
<rect x="793" y="251" width="8" height="1" fill="#7d93ad"/>
<text x="810" y="248" textLength="32" lengthAdjust="spacingAndGlyphs">จอภาพ</text>
<path d="M773 260.0 L777.5 264.5 L782 260.0" stroke="#404040" stroke-width="1.5" fill="none"/>
<path d="M793 260.5 H802.5 L804.5 264.5 H791 Z" fill="url(#drvtop)"/>
<rect x="791" y="264.5" width="13.5" height="5" rx="0.8" fill="#383838"/>
<rect x="791" y="264.5" width="14" height="1" fill="#707070"/>
<rect x="801" y="266.5" width="2" height="2" fill="#38e038"/>
<text x="810" y="266" textLength="45" lengthAdjust="spacingAndGlyphs">ดิสก์ไดรฟ์</text>
<path d="M811 278.5 H820.5 L822.5 282.5 H809 Z" fill="url(#drvtop)"/>
<rect x="809" y="282.5" width="13.5" height="5" rx="0.8" fill="#383838"/>
<rect x="809" y="282.5" width="14" height="1" fill="#707070"/>
<rect x="819" y="284.5" width="2" height="2" fill="#38e038"/>
<text x="829" y="284" textLength="183" lengthAdjust="spacingAndGlyphs">SAMSUNG MZVLQ512HALU-00000</text>
<path d="M811 296.5 H820.5 L822.5 300.5 H809 Z" fill="url(#drvtop)"/>
<rect x="809" y="300.5" width="13.5" height="5" rx="0.8" fill="#383838"/>
<rect x="809" y="300.5" width="14" height="1" fill="#707070"/>
<rect x="819" y="302.5" width="2" height="2" fill="#38e038"/>
<text x="829" y="302" textLength="157" lengthAdjust="spacingAndGlyphs">WDC  WDS500G2B0A-00SM50</text>
<path d="M773 314.0 L777.5 318.5 L782 314.0" stroke="#404040" stroke-width="1.5" fill="none"/>
<path d="M792.5 310.0 H801.5 L803.5 313.5 H790.5 Z" fill="url(#drvtop)"/>
<rect x="790" y="313.5" width="14" height="4" fill="#383838"/>
<rect x="790" y="313.5" width="14" height="1" fill="#707070"/>
<rect x="795" y="315.5" width="9" height="6" fill="#2e9a5c"/>
<rect x="795" y="315.5" width="9" height="1" fill="#56b97e"/>
<rect x="798" y="317.5" width="3" height="2" fill="#2b3a33"/>
<rect x="796" y="316.5" width="1" height="1" fill="#d8f0e0"/>
<rect x="802" y="316.5" width="1" height="1" fill="#d8f0e0"/>
<rect x="796" y="319.5" width="1" height="1" fill="#d8f0e0"/>
<rect x="802" y="319.5" width="1" height="1" fill="#d8f0e0"/>
<rect x="796" y="321.5" width="6" height="2" fill="#f0a010"/>
<rect x="804" y="314.5" width="1" height="9" fill="#7c838c"/>
<rect x="800" y="314.5" width="1" height="1" fill="#38e038"/>
<text x="810" y="320" textLength="129" lengthAdjust="spacingAndGlyphs">ตัวควบคุม IDE ATA/ATAPI</text>
<path d="M812.0 328.0 H821.0 L823.0 331.5 H810.0 Z" fill="url(#drvtop)"/>
<rect x="809.5" y="331.5" width="14" height="4" fill="#383838"/>
<rect x="809.5" y="331.5" width="14" height="1" fill="#707070"/>
<rect x="814.5" y="333.5" width="9" height="6" fill="#2e9a5c"/>
<rect x="814.5" y="333.5" width="9" height="1" fill="#56b97e"/>
<rect x="817.5" y="335.5" width="3" height="2" fill="#2b3a33"/>
<rect x="815.5" y="334.5" width="1" height="1" fill="#d8f0e0"/>
<rect x="821.5" y="334.5" width="1" height="1" fill="#d8f0e0"/>
<rect x="815.5" y="337.5" width="1" height="1" fill="#d8f0e0"/>
<rect x="821.5" y="337.5" width="1" height="1" fill="#d8f0e0"/>
<rect x="815.5" y="339.5" width="6" height="2" fill="#f0a010"/>
<rect x="823.5" y="332.5" width="1" height="9" fill="#7c838c"/>
<rect x="819.5" y="332.5" width="1" height="1" fill="#38e038"/>
<text x="829" y="338" textLength="166" lengthAdjust="spacingAndGlyphs">Standard SATA AHCI Controller</text>
<path d="M775.5 349.0 L780.0 353.5 L775.5 358.0" stroke="#a6a6a6" stroke-width="1.4" fill="none"/>
<rect x="794" y="344" width="5" height="4" fill="#f4f4f4"/>
<rect x="794" y="344" width="5" height="1" fill="#7a7a7a"/>
<rect x="794" y="344" width="1" height="4" fill="#7a7a7a"/>
<rect x="798" y="344" width="1" height="4" fill="#7a7a7a"/>
<rect x="795" y="346" width="1" height="1" fill="#7a7a7a"/>
<rect x="797" y="346" width="1" height="1" fill="#7a7a7a"/>
<path d="M793 348 H800 V353 Q800 355.5 798 355.5 H795 Q793 355.5 793 353 Z" fill="#4a4a4a"/>
<rect x="795" y="355" width="3" height="5" fill="#2e2e2e"/>
<text x="810" y="356" textLength="149" lengthAdjust="spacingAndGlyphs">ตัวควบคุม Universal Serial Bus</text>
<path d="M773 368.0 L777.5 372.5 L782 368.0" stroke="#404040" stroke-width="1.5" fill="none"/>
<path d="M790 367.5 L793.5 364 L797 367.5 L793.5 371 Z" fill="#fff" stroke="#3a3a3a" stroke-width="1.1"/>
<path d="M793 367.5 H798" stroke="#3a3a3a" stroke-width="1.1"/>
<path d="M790 373 L795 375.5 L790 378 Z" fill="#6a6f77"/>
<rect x="795" y="370" width="9" height="6" fill="#2e9a5c"/>
<rect x="795" y="370" width="9" height="1" fill="#56b97e"/>
<rect x="798" y="372" width="3" height="2" fill="#2b3a33"/>
<rect x="796" y="371" width="1" height="1" fill="#d8f0e0"/>
<rect x="802" y="371" width="1" height="1" fill="#d8f0e0"/>
<rect x="796" y="374" width="1" height="1" fill="#d8f0e0"/>
<rect x="802" y="374" width="1" height="1" fill="#d8f0e0"/>
<rect x="796" y="376" width="6" height="2" fill="#f0a010"/>
<rect x="804" y="369" width="1" height="9" fill="#7c838c"/>
<rect x="800" y="369" width="1" height="1" fill="#38e038"/>
<text x="810" y="374" textLength="83" lengthAdjust="spacingAndGlyphs">ตัวควบคุมพื้นที่เก็บ</text>
<path d="M809.5 385.5 L813.0 382 L816.5 385.5 L813.0 389 Z" fill="#fff" stroke="#3a3a3a" stroke-width="1.1"/>
<path d="M812.5 385.5 H817.5" stroke="#3a3a3a" stroke-width="1.1"/>
<path d="M809.5 391 L814.5 393.5 L809.5 396 Z" fill="#6a6f77"/>
<rect x="814.5" y="388" width="9" height="6" fill="#2e9a5c"/>
<rect x="814.5" y="388" width="9" height="1" fill="#56b97e"/>
<rect x="817.5" y="390" width="3" height="2" fill="#2b3a33"/>
<rect x="815.5" y="389" width="1" height="1" fill="#d8f0e0"/>
<rect x="821.5" y="389" width="1" height="1" fill="#d8f0e0"/>
<rect x="815.5" y="392" width="1" height="1" fill="#d8f0e0"/>
<rect x="821.5" y="392" width="1" height="1" fill="#d8f0e0"/>
<rect x="815.5" y="394" width="6" height="2" fill="#f0a010"/>
<rect x="823.5" y="387" width="1" height="9" fill="#7c838c"/>
<rect x="819.5" y="387" width="1" height="1" fill="#38e038"/>
<text x="829" y="392" textLength="189" lengthAdjust="spacingAndGlyphs">Microsoft Storage Spaces Controller</text>
<path d="M809.5 403.5 L813.0 400 L816.5 403.5 L813.0 407 Z" fill="#fff" stroke="#3a3a3a" stroke-width="1.1"/>
<path d="M812.5 403.5 H817.5" stroke="#3a3a3a" stroke-width="1.1"/>
<path d="M809.5 409 L814.5 411.5 L809.5 414 Z" fill="#6a6f77"/>
<rect x="814.5" y="406" width="9" height="6" fill="#2e9a5c"/>
<rect x="814.5" y="406" width="9" height="1" fill="#56b97e"/>
<rect x="817.5" y="408" width="3" height="2" fill="#2b3a33"/>
<rect x="815.5" y="407" width="1" height="1" fill="#d8f0e0"/>
<rect x="821.5" y="407" width="1" height="1" fill="#d8f0e0"/>
<rect x="815.5" y="410" width="1" height="1" fill="#d8f0e0"/>
<rect x="821.5" y="410" width="1" height="1" fill="#d8f0e0"/>
<rect x="815.5" y="412" width="6" height="2" fill="#f0a010"/>
<rect x="823.5" y="405" width="1" height="9" fill="#7c838c"/>
<rect x="819.5" y="405" width="1" height="1" fill="#38e038"/>
<text x="829" y="410" textLength="174" lengthAdjust="spacingAndGlyphs">Standard NVM Express Controller</text>
<path d="M775.5 421.0 L780.0 425.5 L775.5 430.0" stroke="#a6a6a6" stroke-width="1.4" fill="none"/>
<rect x="789.5" y="416.5" width="15" height="15" fill="#3f7350" stroke="#d8a82a" stroke-width="1" stroke-dasharray="1 1"/>
<rect x="790" y="417" width="14" height="14" fill="#3f7350"/>
<rect x="793" y="420" width="8" height="8" fill="#e6e6e6"/>
<rect x="793" y="420" width="8" height="1" fill="#b5b5b5"/>
<rect x="793" y="420" width="1" height="8" fill="#b5b5b5"/>
<text x="810" y="428" textLength="59" lengthAdjust="spacingAndGlyphs">ตัวประมวลผล</text>
<path d="M775.5 439.0 L780.0 443.5 L775.5 448.0" stroke="#a6a6a6" stroke-width="1.4" fill="none"/>
<path d="M790.5 435 Q791 438 794 439.5" stroke="#2a2a2a" stroke-width="1.2" fill="none"/>
<path d="M798 445.8 Q805.5 445 804.2 441.5 Q803.5 439.5 801.5 439.5" stroke="#2a2a2a" stroke-width="1.4" fill="none"/>
<path d="M793.2 438 Q797.5 433.5 802 438 V449 Q797.5 452.5 793.2 449 Z" fill="#3fc050"/>
<path d="M793.2 438 Q797.5 433.5 802 438 V439.8 H793.2 Z" fill="#f4f2fb" stroke="#6a6a8a" stroke-width="0.5"/>
<rect x="794" y="440" width="1" height="8" fill="#8fe89a"/>
<path d="M792.5 443.3 H797 Q799 443.8 798.8 446.2 Q798.5 449.2 796 449.5 H792.5 Z" fill="#707070" stroke="#161616" stroke-width="0.9"/>
<rect x="793" y="444" width="3" height="2" fill="#c9c9c9"/>
<rect x="789" y="444" width="3.3" height="1.5" fill="#e7b100"/>
<rect x="789" y="447" width="3.3" height="1.5" fill="#e7b100"/>
<text x="810" y="446" textLength="41" lengthAdjust="spacingAndGlyphs">แบตเตอรี่</text>
<path d="M775.5 457.0 L780.0 461.5 L775.5 466.0" stroke="#a6a6a6" stroke-width="1.4" fill="none"/>
<rect x="789" y="455" width="16" height="9" fill="#dfe3e8"/>
<rect x="789" y="455" width="16" height="1" fill="#9aa0a9"/>
<rect x="789" y="463" width="16" height="2" fill="#4a4f57"/>
<rect x="790" y="457" width="1" height="1" fill="#ffffff"/>
<rect x="792" y="457" width="1" height="1" fill="#ffffff"/>
<rect x="794" y="457" width="1" height="1" fill="#ffffff"/>
<rect x="796" y="457" width="1" height="1" fill="#ffffff"/>
<rect x="798" y="457" width="1" height="1" fill="#ffffff"/>
<rect x="800" y="457" width="1" height="1" fill="#ffffff"/>
<rect x="802" y="457" width="1" height="1" fill="#ffffff"/>
<rect x="790" y="459" width="1" height="1" fill="#ffffff"/>
<rect x="792" y="459" width="1" height="1" fill="#ffffff"/>
<rect x="794" y="459" width="1" height="1" fill="#ffffff"/>
<rect x="796" y="459" width="1" height="1" fill="#ffffff"/>
<rect x="798" y="459" width="1" height="1" fill="#ffffff"/>
<rect x="800" y="459" width="1" height="1" fill="#ffffff"/>
<rect x="802" y="459" width="1" height="1" fill="#ffffff"/>
<rect x="790" y="461" width="1" height="1" fill="#ffffff"/>
<rect x="792" y="461" width="1" height="1" fill="#ffffff"/>
<rect x="794" y="461" width="1" height="1" fill="#ffffff"/>
<rect x="796" y="461" width="1" height="1" fill="#ffffff"/>
<rect x="798" y="461" width="1" height="1" fill="#ffffff"/>
<rect x="800" y="461" width="1" height="1" fill="#ffffff"/>
<rect x="802" y="461" width="1" height="1" fill="#ffffff"/>
<rect x="793" y="461" width="8" height="1" fill="#ffffff"/>
<text x="810" y="464" textLength="43" lengthAdjust="spacingAndGlyphs">แป้นพิมพ์</text>
<path d="M775.5 475.0 L780.0 479.5 L775.5 484.0" stroke="#a6a6a6" stroke-width="1.4" fill="none"/>
<path d="M792 471 H795 Q797 473.5 799 471 H802 V485 H792 Z" fill="#454545"/>
<rect x="791" y="472" width="1" height="1" fill="#9a9a9a"/>
<rect x="802" y="472" width="1" height="1" fill="#9a9a9a"/>
<rect x="791" y="474" width="1" height="1" fill="#9a9a9a"/>
<rect x="802" y="474" width="1" height="1" fill="#9a9a9a"/>
<rect x="791" y="476" width="1" height="1" fill="#9a9a9a"/>
<rect x="802" y="476" width="1" height="1" fill="#9a9a9a"/>
<rect x="791" y="478" width="1" height="1" fill="#9a9a9a"/>
<rect x="802" y="478" width="1" height="1" fill="#9a9a9a"/>
<rect x="791" y="480" width="1" height="1" fill="#9a9a9a"/>
<rect x="802" y="480" width="1" height="1" fill="#9a9a9a"/>
<rect x="791" y="482" width="1" height="1" fill="#9a9a9a"/>
<rect x="802" y="482" width="1" height="1" fill="#9a9a9a"/>
<rect x="791" y="484" width="1" height="1" fill="#9a9a9a"/>
<rect x="802" y="484" width="1" height="1" fill="#9a9a9a"/>
<text x="810" y="482" textLength="40" lengthAdjust="spacingAndGlyphs">เฟิร์มแวร์</text>
<path d="M775.5 493.0 L780.0 497.5 L775.5 502.0" stroke="#a6a6a6" stroke-width="1.4" fill="none"/>
<rect x="791.5" y="488.5" width="10" height="15" rx="5" fill="#aeb6bf" stroke="#3a3f45" stroke-width="1.2"/>
<rect x="795.5" y="490.5" width="2" height="5" fill="#3a3f45"/>
<text x="810" y="500" textLength="137" lengthAdjust="spacingAndGlyphs">เมาส์และอุปกรณ์ชี้ตำแหน่งอื่นๆ</text>
<g><rect x="414" y="497" width="979" height="467" fill="#000" opacity="0.42" filter="url(#bl3)"/></g>
<rect x="414" y="493" width="979" height="409" fill="#3c3c3c" opacity="0.75"/>
<rect x="415" y="494" width="977" height="30" fill="#ffffff"/>
<rect x="415" y="524" width="960" height="378" fill="#0c0c0c"/>
<rect x="1375" y="524" width="17" height="378" fill="#f0f0f0"/>
<rect x="1376" y="541" width="15" height="17" fill="#cdcdcd"/>
<path d="M1380.0 535 L1383.5 531.5 L1387.0 535" stroke="#505050" stroke-width="2" fill="none"/>
<rect x="423" y="502" width="16" height="13" fill="#000000"/>
<rect x="423" y="502" width="16" height="1" fill="#8a8f99"/>
<rect x="423" y="502" width="1" height="13" fill="#8a8f99"/>
<rect x="438" y="502" width="1" height="13" fill="#8a8f99"/>
<rect x="423" y="514" width="16" height="1" fill="#8a8f99"/>
<rect x="424" y="503" width="14" height="1" fill="#c8ccd6"/>
<text x="424.5" y="512.5" style="font-size:8px;font-weight:bold;fill:#fff;font-family:'Liberation Sans',sans-serif" textLength="12" lengthAdjust="spacingAndGlyphs">C:\_</text>
<text x="444" y="512.5" textLength="188" lengthAdjust="spacingAndGlyphs">Administrator: พร้อมท์คำสั่ง - diskpart</text>
<path d="M1364 503 L1374 513 M1374 503 L1364 513" stroke="#000000" stroke-width="1.1" fill="none"/>
<rect x="1318.5" y="503.5" width="9" height="9" fill="none" stroke="#000000" stroke-width="1" shape-rendering="crispEdges"/>
<rect x="1273" y="508" width="10" height="1" fill="#000000"/>
<text x="415" y="537.5" class="con" textLength="344" lengthAdjust="spacingAndGlyphs">Microsoft Windows [Version 10.0.18363.1016]</text>
<text x="415" y="553.5" class="con" textLength="416" lengthAdjust="spacingAndGlyphs">(c) 2019 Microsoft Corporation. All rights reserved.</text>
<text x="415" y="585.5" class="con" textLength="224" lengthAdjust="spacingAndGlyphs">C:\Windows\system32&gt;diskpart</text>
<text x="415" y="617.5" class="con" textLength="312" lengthAdjust="spacingAndGlyphs">Microsoft DiskPart version 10.0.18362.1</text>
<text x="415" y="649.5" class="con" textLength="288" lengthAdjust="spacingAndGlyphs">Copyright (C) Microsoft Corporation.</text>
<text x="415" y="665.5" class="con" textLength="128" lengthAdjust="spacingAndGlyphs">On computer: MSI</text>
<text x="415" y="697.5" class="con" textLength="152" lengthAdjust="spacingAndGlyphs">DISKPART&gt; list disk</text>
<text x="431" y="729.5" class="con" textLength="408" lengthAdjust="spacingAndGlyphs">Disk ###  Status         Size     Free     Dyn  Gpt</text>
<text x="431" y="745.5" class="con" textLength="408" lengthAdjust="spacingAndGlyphs">--------  -------------  -------  -------  ---  ---</text>
<text x="431" y="761.5" class="con" textLength="400" lengthAdjust="spacingAndGlyphs">Disk 1    Online          476 GB      0 B        *</text>
<text x="415" y="793.5" class="con" textLength="72" lengthAdjust="spacingAndGlyphs">DISKPART&gt;</text>
</svg>
</body></html>
